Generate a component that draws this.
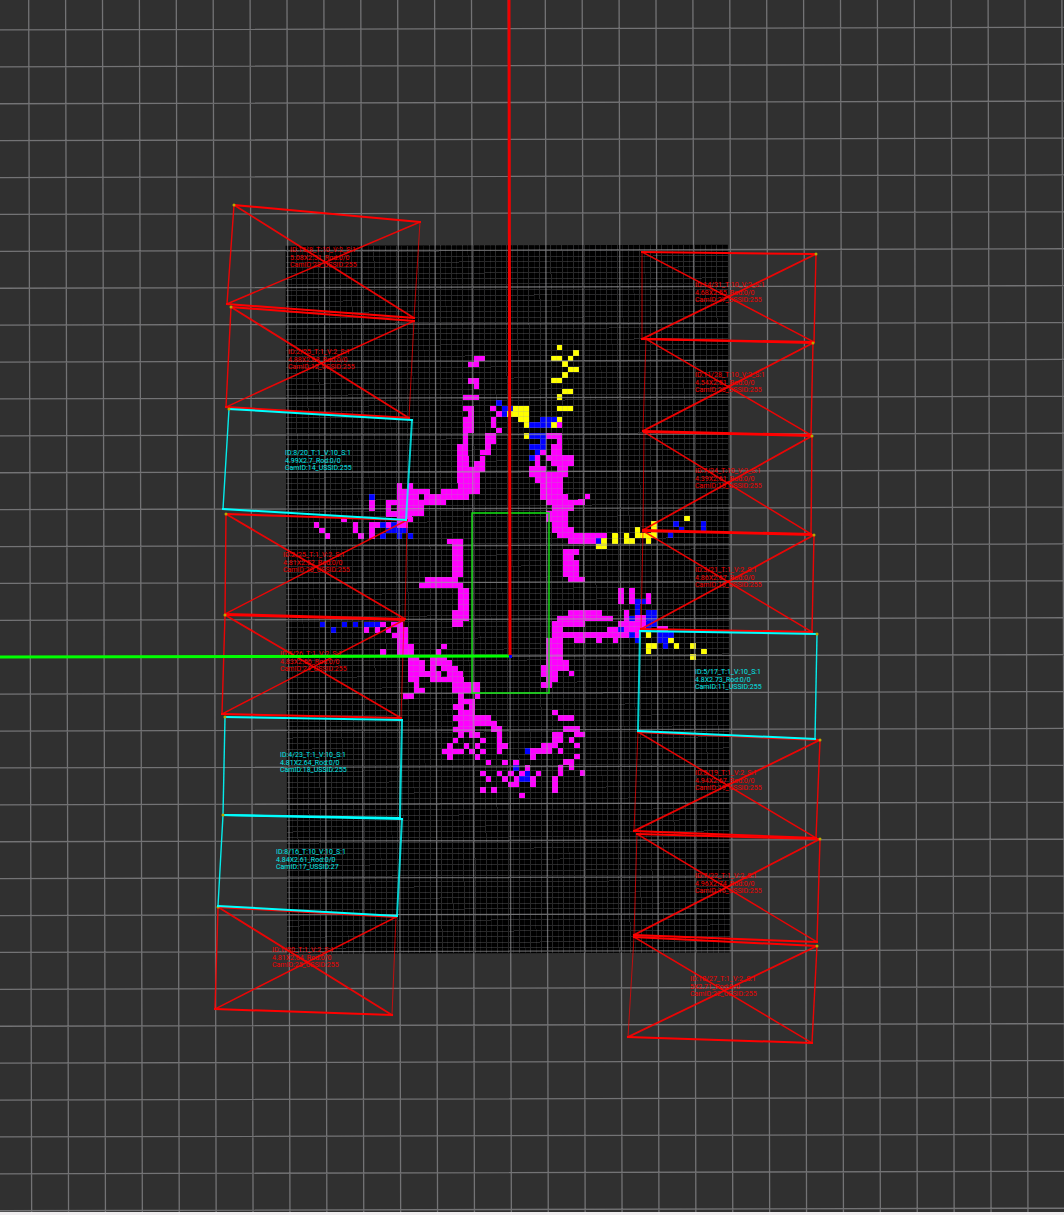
import React from "react";

type Run = [row: number, first: number, last: number];
type Point = [number, number];

interface Slot {
  corners: [Point, Point, Point, Point];
  free: boolean;
  dot: 0 | 1;
  faint: "left" | "right";
  label: { x: number; y: number; lines: [string, string, string] };
}

const ORIGIN = { x: 510, y: 656 };
const STEP = 36.9;
const CELL = 5.53;
const MAP = { x: 286.5, y: 245.3, cols: 80, rows: 128 };

const magenta: Run[] = [
  [20, 34, 35], [21, 33, 34], [24, 33, 34], [25, 34, 34], [27, 32, 34], [29, 32, 33], [29, 37, 37],
  [30, 33, 33], [30, 38, 38], [31, 32, 33], [32, 32, 33], [33, 32, 33], [31, 37, 37], [32, 37, 37],
  [33, 38, 38], [34, 32, 32], [35, 32, 32], [34, 36, 37], [35, 36, 37], [36, 31, 32], [37, 31, 32],
  [36, 36, 36], [37, 35, 36], [38, 31, 32], [38, 35, 35], [39, 31, 32], [39, 34, 35], [40, 31, 35],
  [41, 31, 34], [42, 31, 34], [43, 31, 34], [44, 28, 34], [43, 20, 20], [43, 22, 22], [44, 20, 25],
  [45, 20, 23], [45, 25, 32], [46, 15, 15], [46, 18, 28], [47, 15, 15], [47, 18, 18], [47, 20, 24],
  [48, 18, 24], [49, 10, 10], [49, 20, 22], [50, 5, 5], [50, 12, 12], [50, 15, 16], [50, 18, 18],
  [50, 20, 21], [51, 6, 6], [51, 12, 12], [51, 15, 15], [52, 7, 7], [52, 13, 13], [52, 15, 15],
  [53, 29, 31], [54, 30, 31], [55, 30, 31], [56, 30, 31], [57, 30, 31], [58, 30, 31], [59, 30, 31],
  [60, 25, 30], [61, 24, 31], [62, 31, 32], [63, 31, 32], [64, 31, 32], [65, 31, 32], [66, 30, 32],
  [67, 30, 32], [68, 30, 31], [68, 17, 17], [68, 19, 20], [69, 14, 14], [69, 16, 16], [69, 18, 18],
  [69, 20, 21], [70, 19, 21], [71, 20, 21], [72, 20, 22], [72, 28, 28], [73, 17, 17], [73, 20, 22],
  [73, 27, 27], [74, 22, 23], [74, 26, 28], [75, 22, 24], [75, 26, 29], [76, 22, 24], [76, 26, 26],
  [76, 28, 30], [77, 22, 27], [77, 29, 31], [78, 22, 23], [78, 26, 31], [79, 23, 23], [79, 30, 34],
  [80, 23, 24], [80, 30, 34], [81, 21, 22], [81, 31, 31], [81, 34, 34], [82, 31, 33], [83, 30, 31],
  [83, 33, 33], [84, 31, 33], [85, 30, 36], [86, 31, 37], [87, 30, 33], [87, 37, 38], [88, 31, 31],
  [88, 33, 34], [88, 38, 38], [89, 30, 30], [89, 35, 35], [89, 38, 38], [90, 29, 29], [90, 32, 32],
  [90, 34, 34], [90, 38, 39], [91, 28, 31], [91, 33, 33], [91, 35, 35], [91, 38, 38], [92, 29, 29],
  [92, 34, 34], [93, 36, 36], [93, 39, 39], [93, 41, 41], [94, 43, 43], [95, 35, 35], [95, 38, 38],
  [95, 40, 40], [95, 42, 42], [95, 45, 45], [96, 36, 36], [96, 39, 39], [96, 41, 41], [96, 44, 44],
  [97, 40, 41], [97, 44, 44], [98, 35, 35], [98, 37, 37], [99, 42, 42],
  [84, 48, 48], [85, 49, 51], [87, 50, 52], [88, 48, 49], [88, 52, 53], [89, 48, 49], [89, 51, 51],
  [90, 46, 48], [90, 52, 52], [91, 44, 47], [91, 49, 49], [92, 44, 44], [92, 52, 52], [93, 50, 51],
  [94, 49, 49], [94, 51, 51], [95, 49, 49], [95, 53, 53], [96, 48, 48], [97, 48, 48], [98, 48, 48],
  [32, 49, 49], [34, 47, 49], [35, 49, 49], [36, 48, 49], [37, 46, 46], [37, 48, 49], [38, 45, 45],
  [38, 47, 51], [39, 45, 45], [39, 48, 51], [40, 44, 46], [40, 49, 50], [41, 44, 50], [42, 45, 49],
  [43, 46, 49], [44, 46, 49], [45, 46, 50], [45, 54, 54], [46, 47, 53], [47, 48, 51], [48, 47, 50],
  [49, 47, 50], [50, 48, 50], [51, 48, 51], [52, 49, 57], [53, 51, 55], [55, 50, 52], [56, 50, 51],
  [57, 50, 52], [58, 50, 52], [59, 50, 52], [60, 51, 53], [62, 60, 60], [62, 62, 62], [63, 60, 60],
  [63, 62, 62], [63, 65, 65], [64, 60, 60], [64, 62, 62], [64, 65, 65], [66, 51, 56], [66, 61, 61],
  [67, 49, 58], [67, 61, 61], [67, 63, 64], [68, 48, 53], [68, 60, 64], [69, 48, 49], [69, 58, 59],
  [69, 61, 64], [69, 67, 68], [70, 48, 61], [70, 63, 63], [71, 47, 49], [71, 52, 53], [71, 56, 56],
  [71, 59, 59], [72, 47, 49], [73, 47, 49], [74, 47, 49], [75, 47, 50], [76, 46, 50], [77, 46, 48],
  [77, 51, 51], [78, 47, 48], [79, 46, 47],
];

const blue: Run[] = [
  [45, 15, 15], [50, 17, 17], [50, 19, 19], [51, 18, 21], [52, 17, 17], [52, 20, 20], [52, 22, 22],
  [68, 6, 6], [68, 10, 10], [68, 12, 12], [68, 14, 16], [69, 8, 8], [28, 38, 38], [29, 39, 40],
  [30, 39, 39], [31, 46, 48], [32, 44, 47], [34, 44, 46], [35, 46, 46], [36, 44, 46], [37, 45, 45],
  [38, 44, 44], [91, 43, 43], [94, 41, 41], [95, 43, 43], [96, 42, 43], [50, 70, 70], [50, 75, 75],
  [51, 71, 71], [51, 75, 75], [52, 69, 69], [53, 56, 56], [64, 63, 64], [65, 63, 63], [66, 63, 63],
  [66, 65, 66], [67, 62, 62], [67, 65, 66], [68, 65, 66], [69, 60, 60], [69, 65, 65], [70, 62, 62],
  [70, 67, 69], [71, 63, 63], [71, 67, 68], [72, 68, 68],
];

const yellow: Run[] = [
  [18, 49, 49], [19, 52, 52], [20, 48, 49], [20, 51, 51], [21, 50, 50], [22, 51, 52], [23, 50, 50],
  [24, 48, 49], [26, 50, 51], [27, 49, 49], [29, 41, 43], [29, 49, 51], [30, 40, 43], [31, 42, 43],
  [31, 49, 49], [32, 43, 43], [32, 48, 48], [34, 43, 43], [49, 72, 72], [50, 66, 66], [51, 63, 63],
  [51, 66, 66], [52, 59, 59], [52, 61, 61], [52, 63, 66], [53, 57, 57], [53, 59, 59], [53, 61, 62],
  [53, 65, 65], [54, 56, 57], [70, 65, 65], [71, 69, 69], [72, 65, 66], [72, 70, 70], [72, 73, 73],
  [73, 65, 65], [73, 75, 75], [74, 73, 73],
];

const slot = (
  corners: Slot["corners"],
  free: boolean,
  side: "left" | "right",
  x: number,
  y: number,
  lines: [string, string, string],
): Slot => ({
  corners,
  free,
  dot: side === "left" ? 0 : 1,
  faint: side === "left" ? "right" : "left",
  label: { x, y, lines },
});

const slots: Slot[] = [
  slot([[234, 205], [420, 222], [414, 318], [227, 304]], false, "left", 290, 252, ["ID:15/8_T:10_V:2_S:1", "5.08X2.51_Rod:0/0", "CamID:23_USSID:255"]),
  slot([[231, 307], [414, 321], [409, 418], [226, 407]], false, "left", 288, 354, ["ID:2/25_T:1_V:2_S:1", "4.88X2.68_Rod:0/0", "CamID:12_USSID:255"]),
  slot([[226, 514], [407, 520], [405, 619], [225, 614]], false, "left", 283, 557, ["ID:2/25_T:1_V:2_S:1", "4.81X2.52_Rod:0/0", "CamID:20_USSID:255"]),
  slot([[225, 615], [404, 620], [401, 718], [222, 714]], false, "left", 280, 656, ["ID:5/26_T:1_V:2_S:1", "4.83X2.56_Rod:0/0", "CamID:24_USSID:255"]),
  slot([[218, 907], [396, 917], [392, 1015], [215, 1009]], false, "left", 272, 952, ["ID:1/30_T:1_V:2_S:1", "4.81X2.64_Rod:0/0", "CamID:25_USSID:255"]),
  slot([[642, 252], [816, 254], [814, 342], [642, 339]], false, "right", 695, 287, ["ID:14/31_T:10_V:2_S:1", "4.68X2.55_Rod:0/0", "CamID:27_USSID:255"]),
  slot([[646, 339], [813, 343], [811, 435], [643, 431]], false, "right", 695, 377, ["ID:11/28_T:10_V:2_S:1", "4.54X2.51_Rod:0/0", "CamID:23_USSID:255"]),
  slot([[644, 432], [812, 436], [811, 534], [643, 530]], false, "right", 695, 473, ["ID:7/24_T:10_V:2_S:1", "4.39X2.61_Rod:0/0", "CamID:15_USSID:255"]),
  slot([[643, 531], [814, 535], [812, 632], [641, 629]], false, "right", 695, 572, ["ID:3/21_T:1_V:2_S:1", "4.86X2.67_Rod:0/0", "CamID:16_USSID:255"]),
  slot([[638, 732], [820, 740], [816, 838], [634, 831]], false, "right", 695, 775, ["ID:5/19_T:1_V:2_S:1", "4.94X2.67_Rod:0/0", "CamID:19_USSID:255"]),
  slot([[637, 834], [820, 839], [817, 942], [634, 935]], false, "right", 695, 878, ["ID:7/22_T:1_V:2_S:1", "4.96X2.74_Rod:0/0", "CamID:16_USSID:255"]),
  slot([[634, 937], [817, 946], [812, 1043], [628, 1037]], false, "right", 690, 981, ["ID:10/27_T:1_V:2_S:1", "5X2.71_Rod:0/0", "CamID:22_USSID:255"]),
  slot([[229, 409], [412, 420], [406, 520], [223, 509]], true, "left", 285, 455, ["ID:8/20_T:1_V:10_S:1", "4.99X2.7_Rod:0/0", "CamID:14_USSID:255"]),
  slot([[225, 717], [402, 720], [400, 818], [223, 815]], true, "left", 280, 757, ["ID:4/23_T:1_V:10_S:1", "4.81X2.64_Rod:0/0", "CamID:18_USSID:255"]),
  slot([[223, 815], [402, 819], [397, 916], [218, 906]], true, "left", 276, 854, ["ID:8/16_T:10_V:10_S:1", "4.84X2.61_Rod:0/0", "CamID:17_USSID:27"]),
  slot([[640, 631], [817, 634], [815, 739], [638, 731]], true, "right", 695, 674, ["ID:5/17_T:1_V:10_S:1", "4.8X2.73_Rod:0/0", "CamID:11_USSID:255"]),
];

const range = (from: number, to: number) => Array.from({ length: to - from + 1 }, (_, i) => from + i);

function Cells({ runs, className }: { runs: Run[]; className: string }) {
  const d = runs
    .map(([r, a, b]) => {
      const w = (b - a + 1) * CELL;
      return `M${(MAP.x + a * CELL).toFixed(2)} ${(MAP.y + r * CELL).toFixed(2)}h${w.toFixed(2)}v${CELL}h${(-w).toFixed(2)}z`;
    })
    .join("");
  return <path d={d} className={className} shapeRendering="crispEdges" />;
}

function FineGrid() {
  const w = MAP.cols * CELL;
  const h = MAP.rows * CELL;
  const columns = (odd: number) =>
    range(1, MAP.cols - 1).filter((c) => c % 2 === odd).map((c) => `M${MAP.x + c * CELL} ${MAP.y}v${h}`).join("");
  const rows = range(1, MAP.rows - 1).map((r) => `M${MAP.x} ${MAP.y + r * CELL}h${w}`).join("");
  return (
    <g shapeRendering="crispEdges">
      <path d={rows + columns(0)} className="fill-none stroke-[#a0a0a4]/25" />
      <path d={columns(1)} className="fill-none stroke-[#a0a0a4]/12" />
    </g>
  );
}

function WorldGrid() {
  const d =
    range(-14, 15).map((k) => `M${ORIGIN.x + k * STEP} -10V1230`).join("") +
    range(-18, 15).map((k) => `M-10 ${ORIGIN.y + k * STEP}H1080`).join("");
  return <path d={d} className="fill-none stroke-[#a0a0a4]/60 stroke-[1.3px]" />;
}

function ParkingSlot({ corners, free, dot, faint }: Slot) {
  const [tl, tr, br, bl] = corners;
  const seg = (a: Point, b: Point) => `M${a[0]} ${a[1]}L${b[0]} ${b[1]}`;
  const inner = faint === "left" ? seg(tl, bl) : seg(tr, br);
  const outer = faint === "left" ? seg(tr, br) : seg(tl, bl);
  const back = faint === "left" ? seg(tr, bl) : seg(tl, br);
  const forth = faint === "left" ? seg(tl, br) : seg(tr, bl);
  return (
    <g className={free ? "fill-none stroke-[#00ffff]" : "fill-none stroke-[#ff0000]"} strokeLinecap="square">
      <path d={seg(tl, tr) + seg(bl, br)} className="stroke-2" />
      <path d={outer} className="stroke-[1.4px] opacity-90" />
      <path d={inner} className={free ? "stroke-2 opacity-80" : "stroke-1 opacity-70"} />
      {!free && <path d={back} className="stroke-[1.8px] opacity-90" />}
      {!free && <path d={forth} className="stroke-[1.5px] opacity-90" />}
      <circle cx={corners[dot][0]} cy={corners[dot][1]} r={1.5} className="fill-[#b8a800] stroke-none" />
    </g>
  );
}

function SlotLabel({ free, label }: Slot) {
  return (
    <text className={free ? "fill-[#00e8e8] text-[7px]" : "fill-[#f00000] text-[7px]"}>
      <tspan x={label.x} y={label.y}>{label.lines[0]}</tspan>
      <tspan x={label.x} y={label.y + 8}>{label.lines[1]}</tspan>
      <tspan x={label.x} y={label.y + 15}>{label.lines[2]}</tspan>
    </text>
  );
}

export default function App() {
  return (
    <main className="w-full bg-[#f0eef0] pb-[3px] font-[Roboto,sans-serif]">
      <svg viewBox="0 0 1064 1212" className="block h-auto w-full bg-[#303030]" role="img" aria-label="Parking slot map">
        <g transform={`rotate(-0.14 ${ORIGIN.x} ${ORIGIN.y})`}>
          <rect
            x={MAP.x}
            y={MAP.y}
            width={MAP.cols * CELL}
            height={MAP.rows * CELL}
            className="fill-black"
          />
          <Cells runs={magenta} className="fill-[#ff00ff]" />
          <Cells runs={blue} className="fill-[#0000ff]" />
          <Cells runs={yellow} className="fill-[#ffff00]" />
          <FineGrid />
          <WorldGrid />
        </g>
        {slots.map((s) => (
          <SlotLabel key={`${s.label.x}-${s.label.y}`} {...s} />
        ))}
        {slots.map((s) => (
          <ParkingSlot key={`${s.label.x}-${s.label.y}`} {...s} />
        ))}
        <path d="M472 513H549V693H472Z" className="fill-none stroke-[#14e614] stroke-[1.4px]" />
        <path d="M0 657L510 656" className="stroke-[#00ff00] stroke-3" />
        <path d="M509 0L510 656" className="stroke-[#f00000] stroke-3" />
        <rect x={509} y={655} width={3} height={3} className="fill-[#0000ff]" />
      </svg>
    </main>
  );
}
